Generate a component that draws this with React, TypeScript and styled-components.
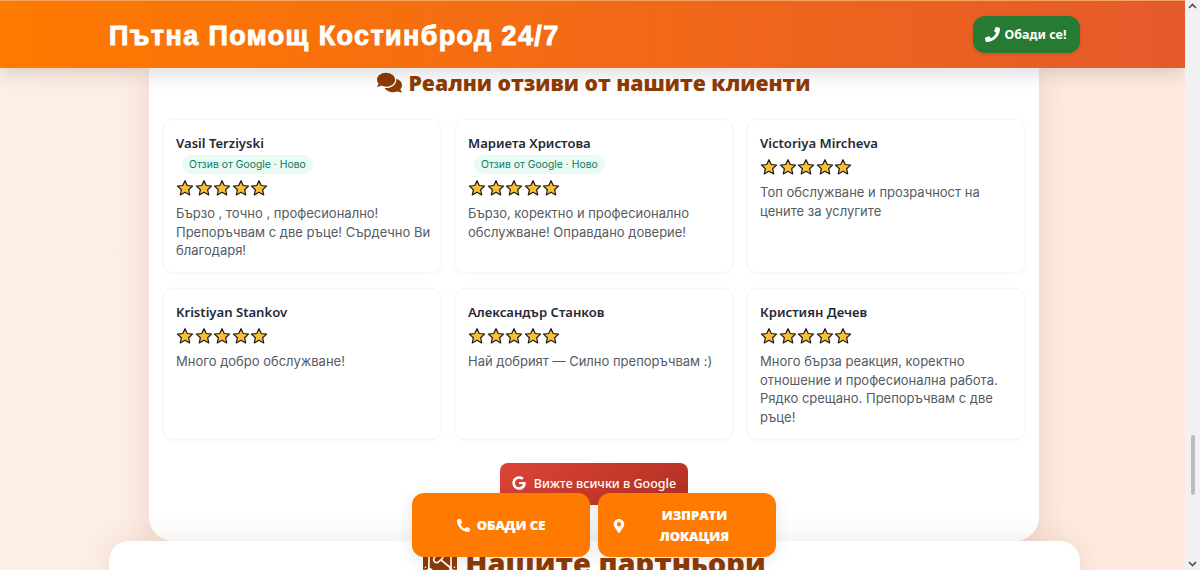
import React from "react";
import styled, { createGlobalStyle } from "styled-components";
import { FaComments, FaGoogle, FaHandshake, FaMapMarkerAlt, FaPhone, FaPhoneAlt } from "react-icons/fa";

const GlobalStyle = createGlobalStyle`
  html, body {
    margin: 0;
    height: 570px;
    overflow: hidden;
    font-family: Inter, "Noto Sans", sans-serif;
  }
  * {
    box-sizing: border-box;
  }
`;

const Shell = styled.div`
  display: flex;
  width: 1200px;
  height: 570px;
`;

const Viewport = styled.div`
  position: relative;
  flex: 1;
  display: flex;
  flex-direction: column;
  overflow: hidden;
  background: linear-gradient(90deg, #fdefe6, #fee9de);
`;

const Header = styled.header`
  position: relative;
  z-index: 5;
  flex: none;
  height: 68px;
  display: flex;
  align-items: center;
  justify-content: space-between;
  padding: 0 105px 0 109px;
  background: linear-gradient(90deg, #ff7a00, #e55a2b);
  border-top: 1px solid #f3a35c;
  box-shadow: 0 4px 20px rgba(0, 0, 0, 0.16);
`;

const Brand = styled.h1`
  margin: 3px 0 0;
  color: #fff;
  font-family: "Liberation Sans", sans-serif;
  font-size: 27px;
  font-weight: 700;
  letter-spacing: 1.38px;
  -webkit-text-stroke: 0.9px #fff;
`;

const CallButton = styled.a`
  width: 107px;
  height: 37px;
  display: flex;
  align-items: center;
  justify-content: center;
  gap: 5px;
  padding-right: 2px;
  background: #267a32;
  border-radius: 12px;
  color: #fff;
  font-family: "Noto Sans", sans-serif;
  font-size: 12.5px;
  font-weight: 700;
  box-shadow: 0 1px 4px rgba(0, 0, 0, 0.12);
`;

const Reviews = styled.section`
  flex: none;
  width: 890px;
  height: 473px;
  margin-left: 149px;
  padding: 0 14px;
  background: #fff;
  border-radius: 0 0 24px 24px;
  box-shadow: 0 8px 32px rgba(120, 50, 10, 0.14);
`;

const ReviewsTitle = styled.h2`
  margin: 0 0 23px;
  height: 28px;
  display: flex;
  align-items: center;
  justify-content: center;
  gap: 6px;
  color: #8f3b05;
  font-family: "Open Sans", sans-serif;
  font-size: 21.2px;
  font-weight: 800;
`;

const ReviewGrid = styled.div`
  display: grid;
  grid-template-columns: repeat(3, 1fr);
  grid-template-rows: 154px 152px;
  gap: 15px 14px;
`;

const ReviewCard = styled.article`
  padding: 13px 8px 13px 12px;
  border: 1px solid #f6f6f6;
  border-radius: 10px;
  background: #fff;
  box-shadow: 0 1px 4px rgba(0, 0, 0, 0.03);
`;

const Name = styled.div`
  color: #1f2937;
  font-family: "Noto Sans", sans-serif;
  font-size: 13.1px;
  font-weight: 600;
  line-height: 20px;
`;

const Badge = styled.span`
  display: inline-block;
  margin: 2px 0 0 6px;
  padding: 0 7px;
  height: 19px;
  border-radius: 10px;
  background: #e9fbf5;
  color: #0f7a5a;
  font-size: 10.4px;
  line-height: 19px;
  vertical-align: top;
`;

const Stars = styled.div`
  display: flex;
  gap: 0.5px;
  margin-top: 4px;
  height: 20px;
  align-items: center;
`;

const Quote = styled.p`
  margin: 6px 0 0;
  color: #555b63;
  font-size: 13px;
  line-height: 18.5px;
  white-space: pre-line;
`;

const MoreRow = styled.div`
  display: flex;
  justify-content: center;
  margin-top: 23px;
`;

const GoogleLink = styled.a`
  width: 188px;
  height: 42px;
  display: flex;
  align-items: center;
  justify-content: center;
  gap: 8px;
  padding-bottom: 2px;
  border-radius: 8px;
  background: linear-gradient(135deg, #db4437, #b23121);
  color: #fff;
  font-family: "Noto Sans", sans-serif;
  font-size: 12.5px;
  font-weight: 500;
`;

const Partners = styled.section`
  flex: none;
  width: 971px;
  height: 120px;
  margin-left: 109px;
  background: #fff;
  border-radius: 20px 20px 0 0;
  box-shadow: 0 0 28px rgba(90, 50, 20, 0.1);
`;

const PartnersTitle = styled.h2`
  margin: 0;
  display: flex;
  align-items: center;
  justify-content: center;
  gap: 8px;
  height: 40px;
  padding-top: 3px;
  color: #8f3b05;
  font-family: "Open Sans", sans-serif;
  font-size: 29px;
  font-weight: 800;
`;

const FloatBar = styled.div`
  position: absolute;
  z-index: 6;
  left: 412px;
  top: 493px;
  display: flex;
  gap: 8px;
`;

const FloatButton = styled.a`
  width: 178px;
  height: 64px;
  display: flex;
  align-items: center;
  justify-content: center;
  gap: 7px;
  padding: 1px 14px 0;
  border-radius: 12px;
  background: #ff7a00;
  color: #fff;
  font-family: "Open Sans", sans-serif;
  font-size: 13px;
  font-weight: 800;
  line-height: 21px;
  text-align: center;
  text-transform: uppercase;
  -webkit-text-stroke: 0.2px #fff;
  box-shadow: 0 4px 16px rgba(0, 0, 0, 0.1);
`;

const FloatLabel = styled.span`
  flex: 1;
  padding-left: 2px;
  padding-right: 8px;
`;

const Scrollbar = styled.div`
  flex: none;
  width: 15px;
  display: flex;
  flex-direction: column;
  align-items: center;
  justify-content: space-between;
  padding: 3px 0;
  background: #f1f1f1;
`;

const Arrow = styled.svg`
  width: 9px;
  height: 7px;
  fill: none;
  stroke: #505050;
  stroke-width: 1.6;
`;

const Thumb = styled.div`
  width: 4px;
  height: 60px;
  margin-top: 425px;
  margin-bottom: auto;
  border-radius: 2px;
  background: #bdbdbd;
`;

const reviews = [
  { name: "Vasil Terziyski", fresh: true, text: "Бързо , точно , професионално! Препоръчвам с две ръце! Сърдечно Ви благодаря!" },
  { name: "Мариета Христова", fresh: true, text: "Бързо, коректно и професионално обслужване! Оправдано доверие!" },
  { name: "Victoriya Mircheva", fresh: false, text: "Топ обслужване и прозрачност на\nцените за услугите" },
  { name: "Kristiyan Stankov", fresh: false, text: "Много добро обслужване!" },
  { name: "Александър Станков", fresh: false, text: "Най добрият — Силно препоръчвам :)" },
  { name: "Кристиян Дечев", fresh: false, text: "Много бърза реакция, коректно\nотношение и професионална работа.\nРядко срещано. Препоръчвам с две\nръце!" },
];

const Star = () => (
  <svg width="18" height="18" viewBox="0 0 24 24">
    <path
      d="M12 2.2l3 6.5 7.1.8-5.3 4.8 1.5 7-6.3-3.6-6.3 3.6 1.5-7-5.3-4.8 7.1-.8z"
      fill="#fbbf36"
      stroke="#1c1c1c"
      strokeWidth="1.6"
      strokeLinejoin="round"
    />
  </svg>
);

const App = () => {
  return (
    <Shell>
      <GlobalStyle />
      <Viewport>
        <Header>
          <Brand>Пътна Помощ Костинброд 24/7</Brand>
          <CallButton>
            <FaPhone size={15} /> Обади се!
          </CallButton>
        </Header>
        <Reviews>
          <ReviewsTitle>
            <FaComments size={25} /> Реални отзиви от нашите клиенти
          </ReviewsTitle>
          <ReviewGrid>
            {reviews.map((r) => (
              <ReviewCard key={r.name}>
                <Name>{r.name}</Name>
                {r.fresh && <Badge>Отзив от Google · Ново</Badge>}
                <Stars>
                  <Star />
                  <Star />
                  <Star />
                  <Star />
                  <Star />
                </Stars>
                <Quote>{r.text}</Quote>
              </ReviewCard>
            ))}
          </ReviewGrid>
          <MoreRow>
            <GoogleLink>
              <FaGoogle size={14} /> Вижте всички в Google
            </GoogleLink>
          </MoreRow>
        </Reviews>
        <Partners>
          <PartnersTitle>
            <FaHandshake size={34} /> Нашите партньори
          </PartnersTitle>
        </Partners>
        <FloatBar>
          <FloatButton>
            <FaPhoneAlt size={13} /> Обади се
          </FloatButton>
          <FloatButton>
            <FaMapMarkerAlt size={14} />
            <FloatLabel>Изпрати локация</FloatLabel>
          </FloatButton>
        </FloatBar>
      </Viewport>
      <Scrollbar>
        <Arrow viewBox="0 0 9 7">
          <path d="M1 5l3.5-3.5L8 5" />
        </Arrow>
        <Thumb />
        <Arrow viewBox="0 0 9 7">
          <path d="M1 2l3.5 3.5L8 2" />
        </Arrow>
      </Scrollbar>
    </Shell>
  );
};

export default App;
